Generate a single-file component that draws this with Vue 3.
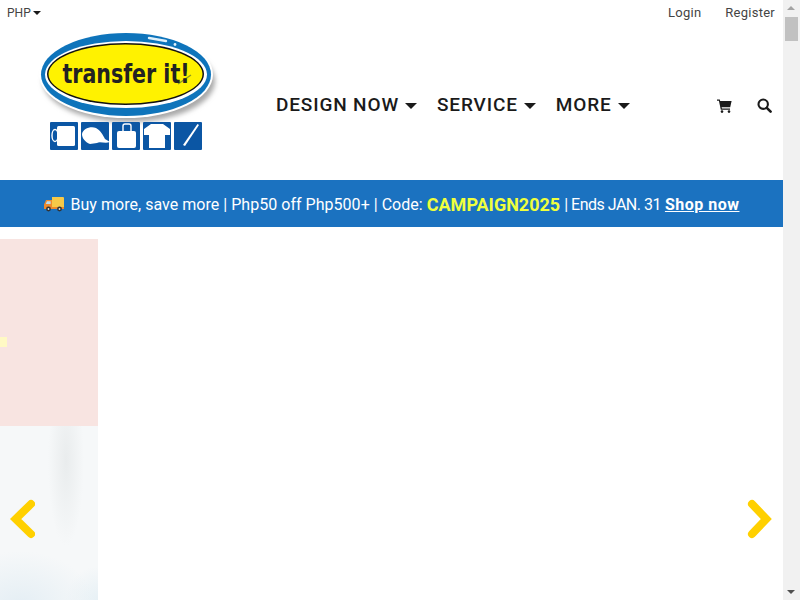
<script setup>
const navItems = ['DESIGN NOW', 'SERVICE', 'MORE']
</script>

<template>
  <div class="app">
    <div class="page">
      <div class="topbar">
        <div class="currency">PHP<span class="caret caret-sm"></span></div>
        <div class="account">
          <a>Login</a>
          <a>Register</a>
        </div>
      </div>

      <header class="header">
        <svg class="logo" width="190" height="130" viewBox="30 25 190 130">
          <defs>
            <filter id="soft" x="-20%" y="-20%" width="140%" height="140%">
              <feGaussianBlur stdDeviation="2.4" />
            </filter>
          </defs>
          <ellipse cx="129" cy="81" rx="86" ry="41" fill="#a8a8a8" filter="url(#soft)" />
          <ellipse cx="126" cy="74.5" rx="87" ry="43.5" fill="#fff" />
          <ellipse cx="126" cy="74.5" rx="85" ry="41.5" fill="#0e74bb" />
          <ellipse cx="126" cy="74.5" rx="81" ry="33.5" fill="#fff" />
          <ellipse cx="125.5" cy="74" rx="78.5" ry="31" fill="#111" />
          <ellipse cx="125.5" cy="74" rx="77" ry="29.5" fill="#fff200" />
          <path d="M149 38 L166 41" stroke="#dff0fa" stroke-width="2.4" stroke-linecap="round" />
          <circle cx="175" cy="44.5" r="1.4" fill="#dff0fa" />
          <path d="M178 84 L191 75" stroke="#8a9a20" stroke-width="1.4" />
          <text transform="translate(126 83) scale(0.88 1)" text-anchor="middle" class="logo-text">transfer it!</text>

          <g fill="#0b56a4">
            <rect x="50" y="122" width="28" height="28" rx="1" />
            <rect x="81" y="122" width="28" height="28" rx="1" />
            <rect x="112" y="122" width="28" height="28" rx="1" />
            <rect x="143" y="122" width="28" height="28" rx="1" />
            <rect x="174" y="122" width="28" height="28" rx="1" />
          </g>
          <g fill="#fff">
            <rect x="57" y="126" width="18" height="20" rx="1.5" />
            <path d="M82 134 C83 129 90 126 96 128 C100 130 103 135 105 139 L110 142 C105 144 100 141 97 143 L90 144 C85 142 82 138 82 134 Z" />
            <rect x="117" y="131" width="19" height="17" rx="2" />
            <path d="M144 129 L151 124 L163 124 L170 129 L170 135 L165 135 L165 148 L149 148 L149 135 L144 135 Z" />
            <path d="M197.5 124 L199 125 L185 146 L183 145 Z" />
          </g>
          <ellipse cx="55" cy="135.5" rx="3" ry="6" fill="none" stroke="#fff" stroke-width="1.4" />
          <path d="M123 132 V126 Q123 124 125 124 H129 Q131 124 131 126 V132" fill="none" stroke="#fff" stroke-width="1.4" />
        </svg>

        <nav class="nav">
          <div v-for="item in navItems" :key="item" class="nav-item">
            {{ item }}<span class="caret"></span>
          </div>
        </nav>

        <div class="tools">
          <svg width="15" height="14" viewBox="0 0 15 14">
            <path fill="#1a1a1a" d="M0 0.5 H2.8 L3.2 2 H14.6 L13.2 8.2 H4.6 L4.9 9.6 H13 V10.8 H3.8 L1.9 1.7 H0 Z" />
            <circle cx="5" cy="12.6" r="1.3" fill="#1a1a1a" />
            <circle cx="12" cy="12.6" r="1.3" fill="#1a1a1a" />
          </svg>
          <svg width="15" height="15" viewBox="0 0 15 15">
            <circle cx="6.2" cy="6.2" r="4.7" fill="none" stroke="#1a1a1a" stroke-width="2.1" />
            <path d="M9.8 9.8 L13.6 13.6" stroke="#1a1a1a" stroke-width="2.6" stroke-linecap="round" />
          </svg>
        </div>
      </header>

      <div class="banner">
        <svg class="truck" width="20" height="16" viewBox="0 0 20 16">
          <path fill="#f7c948" d="M8 1 H19 Q20 1 20 2 V11 H8 Z" />
          <path fill="#ef8a2c" d="M0 8.5 L2 4 H8 V11 H20 V13 H0 Z" />
          <path fill="#b9dcf0" d="M3 5.2 H6.6 V8 H1.8 Z" />
          <circle cx="4.5" cy="13" r="2.4" fill="#333" />
          <circle cx="15.5" cy="13" r="2.4" fill="#333" />
          <circle cx="4.5" cy="13" r="0.9" fill="#ddd" />
          <circle cx="15.5" cy="13" r="0.9" fill="#ddd" />
        </svg>
        <span>Buy more, save more | Php50 off Php500+ | Code:</span>
        <strong class="code">CAMPAIGN2025</strong>
        <span class="ends">| Ends JAN. 31</span>
        <a class="shop">Shop now</a>
      </div>

      <section class="slider">
        <div class="peek">
          <div class="peek-pink"><span class="peek-dot"></span></div>
          <div class="peek-photo"></div>
        </div>
        <svg class="arrow arrow-left" width="28" height="40" viewBox="0 0 28 40">
          <path d="M24 5 L8.7 20 L24 35" fill="none" stroke="#ffd000" stroke-width="8" stroke-linecap="round" stroke-linejoin="miter" />
        </svg>
        <svg class="arrow arrow-right" width="28" height="40" viewBox="0 0 28 40">
          <path d="M7 5 L21.3 20 L7 35" fill="none" stroke="#ffd000" stroke-width="8" stroke-linecap="round" stroke-linejoin="miter" />
        </svg>
      </section>
    </div>

    <div class="scrollbar">
      <span class="sb-up"></span>
      <span class="sb-thumb"></span>
      <span class="sb-down"></span>
    </div>
  </div>
</template>

<style>
html, body {
  margin: 0;
  background: #fff;
  overflow: hidden;
}
</style>

<style scoped>
.app {
  display: flex;
  height: 600px;
  overflow: hidden;
  font-family: "Roboto", "Liberation Sans", sans-serif;
  color: #1a1a1a;
}

.page {
  flex: 1;
  min-width: 0;
  display: flex;
  flex-direction: column;
}

.topbar {
  height: 25px;
  display: flex;
  justify-content: space-between;
  align-items: center;
  padding: 0 8px 0 7px;
  font-size: 13px;
  color: #444;
  box-sizing: border-box;
  flex: none;
}

.currency {
  display: flex;
  align-items: center;
  font-size: 12px;
}

.account {
  display: flex;
  gap: 24px;
  letter-spacing: 0.25px;
}

.caret {
  display: inline-block;
  width: 0;
  height: 0;
  margin-left: 6px;
  border-left: 6px solid transparent;
  border-right: 6px solid transparent;
  border-top: 6px solid #1a1a1a;
  vertical-align: middle;
}

.caret-sm {
  margin-left: 2px;
  border-left-width: 4px;
  border-right-width: 4px;
  border-top-width: 4px;
}

.header {
  height: 155px;
  flex: none;
  display: flex;
  align-items: flex-start;
  padding-left: 30px;
  box-sizing: border-box;
}

.logo {
  flex: none;
  display: block;
}

.logo-text {
  font-family: "DejaVu Sans Condensed", "DejaVu Sans", sans-serif;
  font-weight: 700;
  font-size: 26px;
  fill: #222;
}

.nav {
  display: flex;
  gap: 20px;
  margin: 68px 0 0 56px;
  font-size: 19px;
  font-weight: 500;
  letter-spacing: 0.85px;
  line-height: 24px;
}

.nav-item {
  white-space: nowrap;
}

.tools {
  margin: 73px 0 0 auto;
  padding-right: 11px;
  display: flex;
  align-items: center;
  gap: 25px;
}

.tools svg {
  display: block;
}

.banner {
  height: 47px;
  flex: none;
  padding-top: 1px;
  box-sizing: border-box;
  background: #1b72c0;
  color: #fff;
  display: flex;
  align-items: center;
  justify-content: center;
  gap: 4px;
  font-size: 16px;
  white-space: nowrap;
  letter-spacing: 0.03px;
}

.truck {
  margin-right: 3px;
}

.code {
  color: #efff3d;
  font-size: 18px;
  font-weight: 700;
  letter-spacing: 0;
}

.ends {
  letter-spacing: -0.5px;
}

.shop {
  font-weight: 700;
  letter-spacing: 0.5px;
  text-decoration: underline;
}

.slider {
  position: relative;
  flex: 1;
  min-height: 0;
  margin-top: 12px;
  overflow: hidden;
}

.peek {
  width: 98px;
  height: 100%;
  display: flex;
  flex-direction: column;
}

.peek-pink {
  position: relative;
  height: 187px;
  flex: none;
  background: #f8e4e1;
}

.peek-dot {
  position: absolute;
  left: 0;
  top: 98px;
  width: 7px;
  height: 10px;
  background: #fff9c4;
}

.peek-photo {
  flex: 1;
  background:
    radial-gradient(ellipse 18px 85px at 66px 35px, #e9eced 0%, rgba(233, 236, 237, 0) 100%),
    radial-gradient(ellipse 75px 55px at 20px 180px, #e4eef4 0%, rgba(228, 238, 244, 0) 100%),
    radial-gradient(ellipse 35px 35px at 100px 175px, #e6f0f5 0%, rgba(230, 240, 245, 0) 100%),
    #f6f8f9;
}

.arrow {
  position: absolute;
  top: 260px;
}

.arrow-left {
  left: 7px;
}

.arrow-right {
  left: 745px;
}

.scrollbar {
  position: relative;
  width: 17px;
  flex: none;
  background: #f1f1f1;
}

.sb-thumb {
  position: absolute;
  left: 2px;
  top: 17px;
  width: 13px;
  height: 24px;
  background: #c1c1c1;
}

.sb-up,
.sb-down {
  position: absolute;
  left: 4px;
  width: 0;
  height: 0;
  border-left: 4px solid transparent;
  border-right: 4px solid transparent;
}

.sb-up {
  top: 6px;
  border-bottom: 4px solid #a3a3a3;
}

.sb-down {
  bottom: 6px;
  border-top: 4px solid #505050;
}
</style>
